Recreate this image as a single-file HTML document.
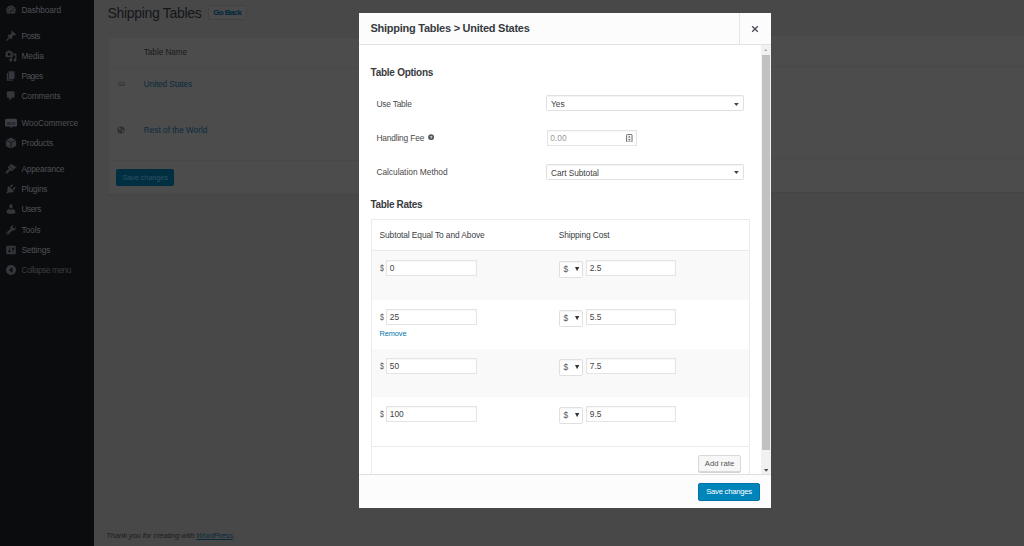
<!DOCTYPE html>
<html><head><meta charset="utf-8">
<style>
*{box-sizing:border-box;margin:0;padding:0}
html,body{width:1024px;height:546px;overflow:hidden}
body{position:relative;background:#484848;font-family:"Liberation Sans",sans-serif;font-size:7.6px;color:#444}
.a{position:absolute;white-space:nowrap;line-height:1}
/* ---------- dimmed background admin ---------- */
#side{left:0;top:0;width:94px;height:546px;background:#0b0c0e}
.mi{color:#4e5257;font-size:8.3px;left:21.4px;margin-top:0.5px}.col{color:#3a3c3f}
.ic{left:4.6px;width:12px;height:12px;margin-top:-0.3px}
.ic svg{display:block;width:12px;height:12px;fill:#33363a}
#ptitle{left:107.5px;top:5.6px;font-size:14px;color:#14161a}
#goback{left:208px;top:5px;width:38.5px;height:15px;border:1px solid #424242;border-radius:1.5px;background:#4a4a4a;color:#00283a;font-size:8px;font-weight:bold;text-align:center;line-height:13.4px}
#panel{left:107.5px;top:37px;width:600px;height:157.6px;background:#4c4c4c;border:1px solid #474747;border-bottom-color:#444}
.psep{left:108px;width:600px;height:1px;background:#484848}
#rpanel{left:765px;top:35px;width:270px;height:158px;background:#4c4c4c;border:1px solid #474747;border-bottom-color:#444}
.rsep{left:765px;width:260px;height:1px;background:#484848}
.lnk{color:#0a2a3c}
#psave{left:116px;top:169px;width:58px;height:17px;background:#002f42;border-radius:2px;color:#2c4f5f;font-size:7.6px;text-align:center;line-height:17px}
#foot{left:106.3px;top:531.5px;font-size:7.6px;font-style:italic;color:#1c1c1c}
#foot u{color:#0a2a3c}
/* ---------- modal ---------- */
#modal{left:359px;top:13px;width:412px;height:495px;background:#fff}
#mhead{left:359px;top:13px;width:412px;height:32px;background:#fcfcfc;border-bottom:1px solid #e2e2e2}
#mclose{left:739px;top:13px;width:1px;height:31px;background:#e4e4e4}
#mtitle{left:370.5px;top:23.3px;font-size:11px;font-weight:bold;color:#363a3f}
#mfoot{left:359px;top:474px;width:412px;height:34px;background:#fcfcfc;border-top:1px solid #dfdfdf}
#msave{left:698px;top:482.5px;width:62px;height:18.5px;background:#0085ba;border:1px solid #0073aa;border-radius:2px;color:#fff;font-size:7.7px;text-align:center;line-height:16.5px}
#track{left:761px;top:45px;width:10px;height:429px;background:#f1f1f1}
#thumb{left:762px;top:55px;width:8px;height:395px;background:#c1c1c1}
h2.a{font-size:10px;font-weight:bold;color:#383c41;margin-top:0.8px}
.lb{left:376.4px;font-size:8.4px;color:#4a4a4a;margin-top:-0.3px}
.sel{height:16px;border:1px solid #e0e0e0;border-radius:1.5px;background:#fff;box-shadow:inset 0 1px 1px rgba(0,0,0,.05);font-size:8.4px;color:#444;line-height:14px;padding-left:3.7px;padding-top:0.8px;overflow:hidden}
.arr{width:0;height:0;border-left:2.2px solid transparent;border-right:2.2px solid transparent;border-top:2.6px solid #444}
.inp{height:15.5px;border:1px solid #e4e4e4;background:#fff;box-shadow:inset 0 1px 1.5px rgba(0,0,0,.04);font-size:8.4px;color:#444;line-height:14px;padding-left:2.8px;padding-top:0.2px;overflow:hidden}
#tbl{left:371px;top:219px;width:379px;height:256px;border:1px solid #ebebeb;border-bottom:0;background:#fff}
.row{left:372px;width:377px;height:49px}
.alt{background:#f9f9f9}
.th{font-size:8.4px;color:#3a3e43}
.cur{font-size:8.8px;color:#5a5a5a;transform:scaleX(.8);transform-origin:0 0;margin-top:-0.3px}
#addrate{left:698px;top:455.3px;width:43px;height:17px;border:1px solid #d9d9d9;border-radius:2px;background:#f7f7f7;box-shadow:0 1px 0 #d4d4d4;color:#555;font-size:7.7px;text-align:center;line-height:15px}

/*FIT*/#m0{letter-spacing:-0.110px}#m1{letter-spacing:-0.413px}#m2{letter-spacing:-0.002px}#m3{letter-spacing:-0.466px}#m4{letter-spacing:-0.128px}#m5{letter-spacing:-0.080px}#m6{letter-spacing:-0.144px}#m7{letter-spacing:-0.185px}#m8{letter-spacing:-0.188px}#m9{letter-spacing:-0.434px}#m10{letter-spacing:-0.015px}#m11{letter-spacing:-0.136px}#m12{letter-spacing:-0.450px}#ptitle{letter-spacing:-0.314px}#tn{letter-spacing:-0.039px}#us{letter-spacing:-0.066px}#rw{letter-spacing:0.029px}#foot{letter-spacing:-0.115px}#mtitle{letter-spacing:-0.254px}#h_opt{letter-spacing:-0.264px}#l1{letter-spacing:-0.199px}#l2{letter-spacing:-0.169px}#l3{letter-spacing:-0.028px}#v3{letter-spacing:-0.084px}#h_rates{letter-spacing:-0.354px}#th1{letter-spacing:-0.082px}#th2{letter-spacing:-0.097px}#rm{letter-spacing:-0.105px}#msv{letter-spacing:-0.261px}#adr{letter-spacing:0.042px}#gbk{letter-spacing:-0.638px}#psv{letter-spacing:-0.212px}/*ENDFIT*/</style></head><body>
<!-- BG -->
<div id="side" class="a"></div>
<div id="panel" class="a"></div>
<div class="a ic" style="top:4.1px"><svg viewBox="0 0 20 20"><path d="M10 2.5a8 8 0 0 0-8 8c0 2 .7 3.800 2 5.200h12a7.900 7.900 0 0 0 2-5.200 8 8 0 0 0-8-8zm0 2a1 1 0 1 1 0 2 1 1 0 0 1 0-2zm-4.500 2a1 1 0 1 1 0 2 1 1 0 0 1 0-2zm9 0a1 1 0 1 1 0 2 1 1 0 0 1 0-2zM4 11.500a1 1 0 1 1 2 0 1 1 0 0 1-2 0zm6 2.500a1.500 1.500 0 0 1-1.400-2l3.900-4.500-2 5.500a1.500 1.500 0 0 1-.5 1zm5-1.500a1 1 0 1 1 0-2 1 1 0 0 1 0 2z"/></svg></div><div class="a mi" id="m0" style="top:5.3px">Dashboard</div>
<div class="a ic" style="top:30.5px"><svg viewBox="0 0 20 20"><path d="M10.440 3.020l1.820-1.820 6.360 6.350-1.830 1.820c-1.050-.680-2.480-.570-3.410.360l-.750.750c-.920.930-1.040 2.350-.350 3.410l-1.830 1.820-2.410-2.410-2.800 2.790c-.420.420-3.380 2.710-3.800 2.290s1.860-3.390 2.280-3.810l2.790-2.790L4.100 9.360l1.830-1.820c1.050.690 2.480.570 3.400-.360l.750-.750c.930-.920 1.050-2.350.360-3.410z"/></svg></div><div class="a mi" id="m1" style="top:31.7px">Posts</div>
<div class="a ic" style="top:50.6px"><svg viewBox="0 0 20 20"><path d="M13 11V4c0-.550-.450-1-1-1h-1.670L9 1H5L3.670 3H2c-.550 0-1 .450-1 1v7c0 .550.450 1 1 1h10c.550 0 1-.450 1-1zM7 4.500c1.380 0 2.500 1.120 2.500 2.500S8.380 9.500 7 9.500 4.500 8.380 4.500 7 5.620 4.500 7 4.500zM14 6h5v10.500c0 1.380-1.120 2.500-2.500 2.500S14 17.880 14 16.500s1.120-2.500 2.500-2.500c.170 0 .340.020.5.050V9h-3V6zm-4 8.050V13h2v3.500c0 1.380-1.120 2.500-2.500 2.500S7 17.880 7 16.500 8.120 14 9.500 14c.170 0 .340.020.5.050z"/></svg></div><div class="a mi" id="m2" style="top:51.8px">Media</div>
<div class="a ic" style="top:70.6px"><svg viewBox="0 0 20 20"><path d="M6 15V2h10v13H6zm-1 1h8v2H3V5h2v11z"/></svg></div><div class="a mi" id="m3" style="top:71.8px">Pages</div>
<div class="a ic" style="top:90.7px"><svg viewBox="0 0 20 20"><path d="M5 2h9c1.100 0 2 .900 2 2v7c0 1.100-.900 2-2 2h-2l-5 5v-5H5c-1.100 0-2-.900-2-2V4c0-1.100.900-2 2-2z"/></svg></div><div class="a mi" id="m4" style="top:91.9px">Comments</div>
<div class="a ic" style="top:117.1px"><svg viewBox="0 0 20 20"><rect x="0" y="3" width="20" height="13" rx="2.500" fill="#3c3f43"/><path d="M8 16l4 3.500-1-3.500z" fill="#3c3f43"/><text x="10" y="12.500" font-size="7.500" font-weight="bold" text-anchor="middle" fill="#16181a" font-family="Liberation Sans">woo</text></svg></div><div class="a mi" id="m5" style="top:118.3px">WooCommerce</div>
<div class="a ic" style="top:137.1px"><svg viewBox="0 0 20 20"><path d="M10 1L2 4.800l8 3.800 8-3.800zM1.500 6v9L9.400 19V9.700zM18.500 6l-7.900 3.700V19l7.900-4z"/></svg></div><div class="a mi" id="m6" style="top:138.3px">Products</div>
<div class="a ic" style="top:163.6px"><svg viewBox="0 0 20 20"><path d="M14.480 11.060L7.410 3.990l1.500-1.500c.500-.560 2.300-.470 3.510.320 1.210.800 1.430 1.280 2.910 2.100 1.180.640 2.450 1.260 4.450.850zm-.710.710L6.700 4.700 4.930 6.470c-.390.390-.390 1.020 0 1.410l1.060 1.060c.390.390.390 1.030 0 1.420-.600.600-1.430 1.110-2.210 1.690-.350.260-.700.530-1.010.840C1.430 14.230.400 16.080 1.400 17.070c.990 1 2.840-.030 4.180-1.360.310-.310.580-.660.850-1.020.570-.780 1.080-1.610 1.690-2.210.390-.390 1.020-.390 1.410 0l1.060 1.060c.390.390 1.020.390 1.410 0z"/></svg></div><div class="a mi" id="m7" style="top:164.8px">Appearance</div>
<div class="a ic" style="top:183.7px"><svg viewBox="0 0 20 20"><path d="M13.110 4.360L9.870 7.600 8 5.730l3.240-3.240c.350-.340 1.050-.200 1.560.320.520.510.660 1.210.310 1.550zm-8 1.770l.910-1.120 9.010 9.010-1.190.840c-.710.710-2.630 1.160-3.820 1.160H6.140L4.900 17.260c-.590.590-1.540.590-2.120 0-.590-.580-.590-1.530 0-2.120l1.240-1.240v-3.880c0-1.130.400-3.190 1.090-3.890zm7.260 3.970l3.240-3.240c.340-.350 1.040-.210 1.550.310.520.510.660 1.210.310 1.550l-3.240 3.250z"/></svg></div><div class="a mi" id="m8" style="top:184.9px">Plugins</div>
<div class="a ic" style="top:203.7px"><svg viewBox="0 0 20 20"><path d="M10 9.250c-2.270 0-2.730-3.440-2.730-3.440C7 4.020 7.820 2 9.970 2c2.160 0 2.980 2.020 2.710 3.810 0 0-.410 3.440-2.680 3.440zm0 2.570L12.720 10c2.390 0 4.520 2.330 4.520 4.530v2.490s-3.650 1.130-7.240 1.130c-3.650 0-7.240-1.130-7.240-1.130v-2.490c0-2.250 1.940-4.480 4.470-4.480z"/></svg></div><div class="a mi" id="m9" style="top:204.9px">Users</div>
<div class="a ic" style="top:223.8px"><svg viewBox="0 0 20 20"><path d="M16.680 9.770c-1.340 1.340-3.300 1.670-4.950.990l-5.410 6.520c-.990.990-2.590.990-3.580 0s-.990-2.590 0-3.570l6.520-5.420c-.680-1.650-.350-3.610.990-4.950 1.280-1.280 3.120-1.620 4.720-1.060l-2.890 2.890 2.820 2.820 2.860-2.870c.530 1.580.180 3.390-1.080 4.650zM3.810 16.210c.400.390 1.040.390 1.430 0 .400-.400.400-1.040 0-1.430-.390-.400-1.030-.400-1.430 0-.390.390-.390 1.030 0 1.430z"/></svg></div><div class="a mi" id="m10" style="top:225.0px">Tools</div>
<div class="a ic" style="top:243.9px"><svg viewBox="0 0 20 20"><path d="M18 16V4c0-.550-.450-1-1-1H3c-.550 0-1 .450-1 1v12c0 .550.450 1 1 1h14c.550 0 1-.450 1-1zM8 11h1c.550 0 1 .450 1 1s-.450 1-1 1H8v1.500c0 .280-.220.500-.500.500s-.500-.220-.500-.500V13H6c-.550 0-1-.450-1-1s.450-1 1-1h1V5.500c0-.280.220-.500.500-.500s.500.220.500.500V11zm5-2h-1c-.550 0-1-.450-1-1s.450-1 1-1h1V5.500c0-.280.220-.500.500-.500s.500.220.500.500V7h1c.550 0 1 .450 1 1s-.450 1-1 1h-1v5.500c0 .280-.220.500-.500.500s-.500-.220-.500-.500V9z"/></svg></div><div class="a mi" id="m11" style="top:245.1px">Settings</div>
<div class="a ic" style="top:263.9px"><svg viewBox="0 0 20 20"><path d="M10 1.500a8.500 8.500 0 1 0 0 17 8.500 8.500 0 0 0 0-17zM12.500 14.500L6.500 10l6-4.500z"/></svg></div><div class="a mi col" id="m12" style="top:265.1px">Collapse menu</div>
<div class="a" id="ptitle">Shipping Tables</div>
<div class="a" id="goback"><span id="gbk">Go Back</span></div>
<div id="rpanel" class="a"></div><div class="a rsep" style="top:66px"></div><div class="a rsep" style="top:158px"></div>
<div class="a psep" style="top:68px"></div>
<div class="a psep" style="top:160px"></div>
<div class="a th2" id="tn" style="left:143.8px;top:49.4px;font-size:8.2px;color:#1b1b1b">Table Name</div>
<div class="a lnk" id="us" style="left:143.8px;top:80.6px;font-size:8.2px">United States</div>
<div class="a lnk" id="rw" style="left:143.8px;top:126.5px;font-size:8.2px">Rest of the World</div>
<div class="a" style="left:118px;top:81.8px;width:6.5px;height:1px;background:#3b3b3b"></div>
<div class="a" style="left:118px;top:83.5px;width:6.5px;height:1px;background:#3b3b3b"></div>
<div class="a" style="left:118px;top:85.2px;width:6.5px;height:1px;background:#3b3b3b"></div>
<div class="a" style="left:116.9px;top:125.6px;width:8px;height:8px"><svg viewBox="0 0 20 20" style="display:block;width:8px;height:8px"><circle cx="10" cy="10" r="9" fill="#2e2e2e"/><path d="M5 4l4 1 1 3-3 2-3-2zM12 9l4 1 1 4-3 3-2-4z" fill="#4c4c4c"/></svg></div>
<div class="a" id="psave"><span id="psv">Save changes</span></div>
<div class="a" id="foot">Thank you for creating with <u>WordPress</u>.</div>
<!-- MODAL -->
<div id="modal" class="a"></div>
<div id="mhead" class="a"></div><div id="mclose" class="a"></div>
<div id="tbl" class="a"></div>
<div class="a" id="mtitle">Shipping Tables &gt; United States</div>
<svg class="a" style="left:750.5px;top:24.5px;width:8px;height:8px" viewBox="0 0 8 8"><path d="M1.200 1.200L6.800 6.800M6.800 1.200L1.200 6.800" stroke="#4a4f55" stroke-width="1.350" fill="none"/></svg>
<h2 class="a" id="h_opt" style="left:370.6px;top:67.2px">Table Options</h2>
<div class="a lb" id="l1" style="top:100px">Use Table</div>
<div class="a lb" id="l2" style="top:134.2px">Handling Fee</div>
<svg class="a" style="left:428px;top:134.2px;width:6.3px;height:6.3px" viewBox="0 0 20 20"><circle cx="10" cy="10" r="9.500" fill="#555"/><text x="10" y="15" font-size="14" font-weight="bold" text-anchor="middle" fill="#fff" font-family="Liberation Sans">?</text></svg>
<div class="a lb" id="l3" style="top:168.400px">Calculation Method</div>
<div class="a sel" style="left:546.300px;top:95.300px;width:197.500px"><span id="v1">Yes</span></div>
<svg class="a" style="left:734.0px;top:102.5px;width:4.8px;height:3px" viewBox="0 0 48 30"><path d="M0 0H48L24 30z" fill="#444"/></svg>
<div class="a inp" style="left:546.500px;top:130px;width:90.500px;color:#999;height:16px;line-height:14.4px;padding-top:0"><span id="v2">0.00</span></div>
<svg class="a" style="left:626.300px;top:133.700px;width:6.600px;height:8.600px" viewBox="0 0 13 17"><rect x="1" y="1" width="11" height="15" rx="1.500" fill="#f4f4f4" stroke="#666" stroke-width="1.800"/><path d="M6.500 3.500L9 7H4zM6.500 13.500L9 10H4z" fill="#666"/></svg>
<div class="a sel" style="left:546.300px;top:164px;width:197.500px"><span id="v3">Cart Subtotal</span></div>
<svg class="a" style="left:734.0px;top:171.2px;width:4.8px;height:3px" viewBox="0 0 48 30"><path d="M0 0H48L24 30z" fill="#444"/></svg>
<h2 class="a" id="h_rates" style="left:370.600px;top:199.700px">Table Rates</h2>
<div class="a th" id="th1" style="left:379.5px;top:231px">Subtotal Equal To and Above</div>
<div class="a th" id="th2" style="left:558.7px;top:231px">Shipping Cost</div>
<div class="a" style="left:372px;top:250px;width:377px;height:1px;background:#ebebeb"></div>
<div class="a row alt" style="top:251px;height:49px"></div>
<div class="a cur" style="left:379.6px;top:263.8px">$</div><div class="a inp" style="left:386px;top:260px;width:91px;height:16px">0</div><div class="a sel" style="left:559px;top:261px;width:24px;height:17px;padding-left:3.4px;padding-top:0.4px;line-height:15px;color:#555">$</div><svg class="a" style="left:575.2px;top:267.2px;width:4.2px;height:4.2px" viewBox="0 0 42 42"><path d="M0 0H42L21 42z" fill="#333"/></svg><div class="a inp" style="left:586px;top:260px;width:90px;height:16px">2.5</div>
<div class="a cur" style="left:379.6px;top:312.8px">$</div><div class="a inp" style="left:386px;top:309px;width:91px;height:16px">25</div><div class="a sel" style="left:559px;top:310px;width:24px;height:17px;padding-left:3.4px;padding-top:0.4px;line-height:15px;color:#555">$</div><svg class="a" style="left:575.2px;top:316.2px;width:4.2px;height:4.2px" viewBox="0 0 42 42"><path d="M0 0H42L21 42z" fill="#333"/></svg><div class="a inp" style="left:586px;top:309px;width:90px;height:16px">5.5</div>
<div class="a row alt" style="top:349px;height:48px"></div>
<div class="a cur" style="left:379.6px;top:361.8px">$</div><div class="a inp" style="left:386px;top:358px;width:91px;height:16px">50</div><div class="a sel" style="left:559px;top:359px;width:24px;height:17px;padding-left:3.4px;padding-top:0.4px;line-height:15px;color:#555">$</div><svg class="a" style="left:575.2px;top:365.2px;width:4.2px;height:4.2px" viewBox="0 0 42 42"><path d="M0 0H42L21 42z" fill="#333"/></svg><div class="a inp" style="left:586px;top:358px;width:90px;height:16px">7.5</div>
<div class="a cur" style="left:379.6px;top:409.8px">$</div><div class="a inp" style="left:386px;top:406px;width:91px;height:16px">100</div><div class="a sel" style="left:559px;top:407px;width:24px;height:17px;padding-left:3.4px;padding-top:0.4px;line-height:15px;color:#555">$</div><svg class="a" style="left:575.2px;top:413.2px;width:4.2px;height:4.2px" viewBox="0 0 42 42"><path d="M0 0H42L21 42z" fill="#333"/></svg><div class="a inp" style="left:586px;top:406px;width:90px;height:16px">9.5</div>
<div class="a" id="rm" style="left:379.5px;top:329.8px;font-size:7.4px;color:#0073aa">Remove</div>
<div class="a" style="left:372px;top:446.3px;width:377px;height:1px;background:#ebebeb"></div>
<div class="a" id="addrate"><span id="adr">Add rate</span></div>
<div id="track" class="a"></div><div id="thumb" class="a"></div>
<svg class="a" style="left:764.2px;top:48.8px;width:3.6px;height:2.4px" viewBox="0 0 36 24"><path d="M0 24H36L18 0z" fill="#a0a0a0"/></svg>
<svg class="a" style="left:763.8px;top:468.9px;width:4.4px;height:2.8px" viewBox="0 0 44 28"><path d="M0 0H44L22 28z" fill="#505050"/></svg>
<div id="mfoot" class="a"></div>
<div class="a" id="msave"><span id="msv">Save changes</span></div>
</body></html>
